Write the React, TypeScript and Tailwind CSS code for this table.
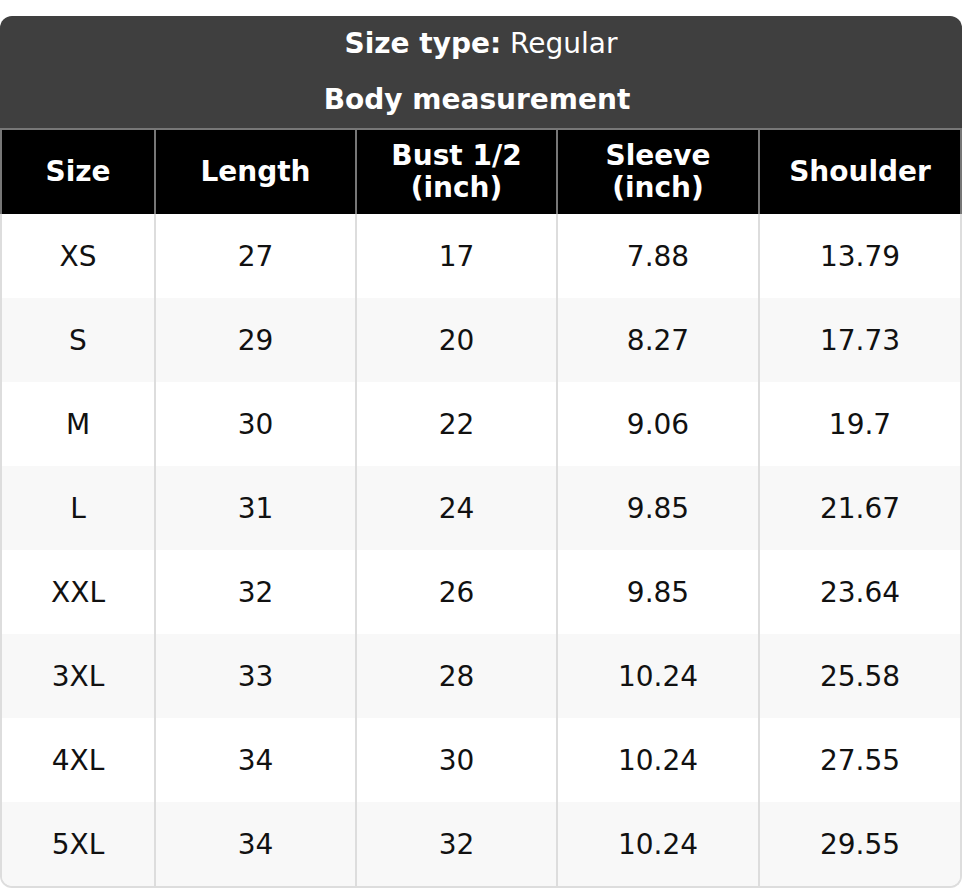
import React from "react";

const rows: string[][] = [
  ["XS", "27", "17", "7.88", "13.79"],
  ["S", "29", "20", "8.27", "17.73"],
  ["M", "30", "22", "9.06", "19.7"],
  ["L", "31", "24", "9.85", "21.67"],
  ["XXL", "32", "26", "9.85", "23.64"],
  ["3XL", "33", "28", "10.24", "25.58"],
  ["4XL", "34", "30", "10.24", "27.55"],
  ["5XL", "34", "32", "10.24", "29.55"],
];

const heads: React.ReactNode[] = [
  "Size",
  "Length",
  <>Bust 1/2<br />(inch)</>,
  <>Sleeve<br />(inch)</>,
  "Shoulder",
];

export default function App() {
  return (
    <div
      className="w-[962px] bg-white pt-[16px]"
      style={{ fontFamily: '"DejaVu Sans", Verdana, sans-serif' }}
    >
      <div className="bg-[#3f3f3f] rounded-t-[12px] text-white text-[28px]">
        <div className="h-[56px] flex items-center justify-center">
          <span className="font-bold">Size type:</span>
          <span>&nbsp;Regular</span>
        </div>
        <div className="h-[56px] flex items-center justify-center font-bold pr-[8px]">
          Body measurement
        </div>
      </div>
      <div className="border-t-2 border-x-2 border-[#777777] bg-black grid grid-cols-[152px_201px_201px_202px_202px]">
        {heads.map((h, i) => (
          <div
            key={i}
            className={`h-[84px] flex items-center justify-center text-center text-white font-bold text-[28px] leading-[32px] ${i > 0 ? "border-l-2 border-[#777777]" : ""}`}
          >
            <div>{h}</div>
          </div>
        ))}
      </div>
      <div className="border-x-2 border-b-2 border-[#dddddd] rounded-b-[12px] overflow-hidden">
        {rows.map((r, ri) => (
          <div
            key={ri}
            className={`grid grid-cols-[152px_201px_201px_202px_202px] ${ri % 2 === 1 ? "bg-[#f8f8f8]" : "bg-white"}`}
          >
            {r.map((c, ci) => (
              <div
                key={ci}
                className={`h-[84px] flex items-center justify-center pt-[2px] text-[28px] text-[#111111] ${ci > 0 ? "border-l-2 border-[#dddddd]" : ""}`}
              >
                {c}
              </div>
            ))}
          </div>
        ))}
      </div>
    </div>
  );
}
